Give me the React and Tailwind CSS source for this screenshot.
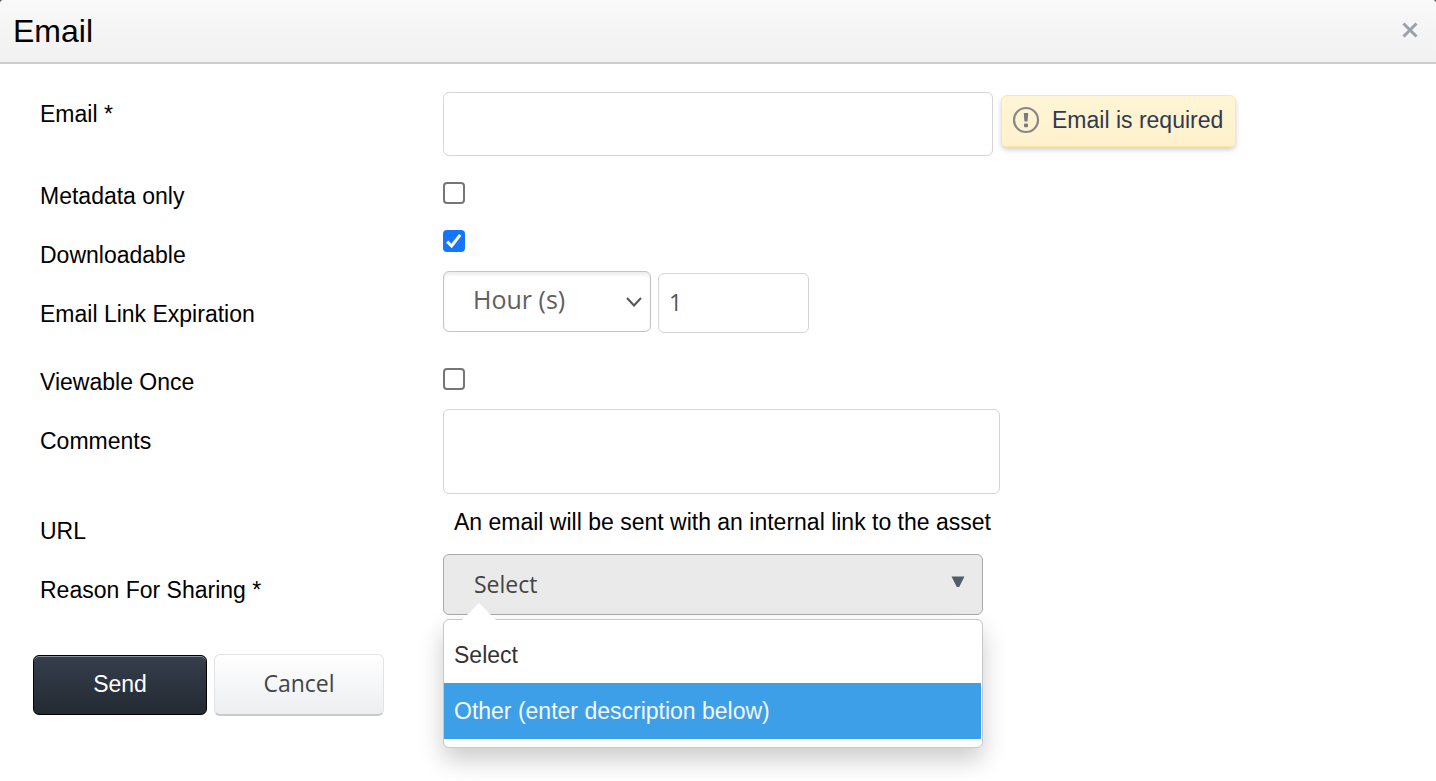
import { useState } from "react";

const options = ["Select", "Other (enter description below)"];

function Row({ label, htmlFor, id, className, labelClass, children }) {
  return (
    <div className={`flex items-start ${className}`}>
      <label id={id} htmlFor={htmlFor} className={`w-[403px] shrink-0 leading-7 ${labelClass}`}>
        {label}
      </label>
      {children}
    </div>
  );
}

function Checkbox({ id, defaultChecked }) {
  return (
    <span className="grid size-[22px] place-items-center">
      <input
        id={id}
        type="checkbox"
        defaultChecked={defaultChecked}
        className="peer col-start-1 row-start-1 size-[22px] appearance-none rounded-[4px] border-2 border-[#767676] bg-white checked:border-[#1476ff] checked:bg-[#1476ff]"
      />
      <svg
        viewBox="0 0 22 22"
        className="pointer-events-none invisible col-start-1 row-start-1 size-[22px] peer-checked:visible"
        aria-hidden="true"
      >
        <path d="M4.2 11.6L8.6 16L17.2 4.8" fill="none" stroke="#ffffff" strokeWidth="3" />
      </svg>
    </span>
  );
}

function ReasonSelect() {
  const [open, setOpen] = useState(true);
  const [value, setValue] = useState("Select");
  const [active, setActive] = useState(1);

  return (
    <div className="relative w-[540px]">
      <button
        id="reason"
        type="button"
        aria-haspopup="listbox"
        aria-expanded={open}
        aria-labelledby="reason-label reason"
        onClick={() => setOpen(!open)}
        className="flex h-[61px] w-full items-center justify-between rounded-md border border-[#aaaaaa] bg-[#eaeaea] pr-[17px] pl-[30px] text-left font-['Open_Sans',sans-serif] text-[#444444]"
      >
        {value}
        <svg viewBox="0 0 14 12" className="mb-[6px] h-3 w-[14px]" aria-hidden="true">
          <path d="M0.5 0.5H13.5L8.2 11H5.8Z" fill="#535c6b" />
        </svg>
      </button>
      {open && (
        <div className="absolute top-full left-0 z-10 mt-1 w-full rounded-md border border-[#c8c8c8] bg-white pt-[7px] pr-px pb-2 shadow-[0_12px_24px_rgba(0,0,0,0.2)]">
          <svg
            viewBox="0 0 36 18"
            className="absolute bottom-full left-[17px] -mb-px h-[18px] w-9"
            aria-hidden="true"
          >
            <path d="M0 18L18 0L36 18Z" fill="#ffffff" />
          </svg>
          <ul role="listbox" aria-labelledby="reason-label">
            {options.map((option, i) => (
              <li
                key={option}
                role="option"
                aria-selected={option === value}
                onMouseEnter={() => setActive(i)}
                onClick={() => {
                  setValue(option);
                  setOpen(false);
                }}
                className={`flex h-14 cursor-pointer items-center px-[10px] ${
                  i === active ? "bg-[#3e9fe9] text-[#f4f8fb]" : "text-[#333333]"
                }`}
              >
                {option}
              </li>
            ))}
          </ul>
        </div>
      )}
    </div>
  );
}

export default function App() {
  return (
    <div className="bg-[#555555]">
      <div
        role="dialog"
        aria-labelledby="dialog-title"
        className="min-h-screen rounded-t-[4px] bg-white font-['Liberation_Sans',Arial,sans-serif] text-[23px] text-black"
      >
        <header className="flex h-16 items-center justify-between rounded-t-[4px] border-b-2 border-[#cccccc] bg-linear-to-b from-[#f9f9f9] to-[#f1f1f1] pr-[18px] pl-[13px]">
          <h1 id="dialog-title" className="text-[32px] leading-10">
            Email
          </h1>
          <button type="button" aria-label="Close" className="pb-[2px]">
            <svg viewBox="0 0 16 16" className="size-4" aria-hidden="true">
              <path d="M1.5 1.5L14.5 14.5M14.5 1.5L1.5 14.5" stroke="#9ca1a9" strokeWidth="3" fill="none" />
            </svg>
          </button>
        </header>

        <form className="pt-7 pb-8" onSubmit={(e) => e.preventDefault()}>
          <div className="px-10">
            <Row label="Email *" htmlFor="email" className="min-h-[90px]" labelClass="pt-2">
              <input
                id="email"
                type="email"
                aria-describedby="email-error"
                className="h-16 w-[550px] rounded-md border border-[#d5d5d5] px-3"
              />
              <div
                id="email-error"
                role="alert"
                className="mt-[3px] ml-2 flex h-[52px] items-center gap-3 rounded-md border border-[#ffe79e] bg-linear-to-b from-[#fff5d5] to-[#fff1cc] pr-3 pb-[2px] pl-[10px] text-[#2f3b4e] shadow-[0_3px_5px_rgba(0,0,0,0.18)]"
              >
                <svg viewBox="0 0 28 28" className="size-7" aria-hidden="true">
                  <circle cx="14" cy="14" r="12" fill="none" stroke="#85888a" strokeWidth="2.2" />
                  <path d="M11.8 7H16.2L15.6 15.5H12.4Z" fill="#777b80" />
                  <rect x="12" y="17.4" width="4" height="3.8" rx="1" fill="#777b80" />
                </svg>
                <span className="leading-7">Email is required</span>
              </div>
            </Row>

            <Row label="Metadata only" htmlFor="metadata" className="min-h-12">
              <Checkbox id="metadata" />
            </Row>

            <Row label="Downloadable" htmlFor="downloadable" className="min-h-[41px]" labelClass="pt-[11px]">
              <Checkbox id="downloadable" defaultChecked />
            </Row>

            <Row label="Email Link Expiration" htmlFor="expiration-unit" className="min-h-[97px]" labelClass="pt-[29px]">
              <div className="relative w-52">
                <select
                  id="expiration-unit"
                  className="h-[61px] w-full appearance-none rounded-md border border-[#c4c4c4] bg-white pb-1 pl-[29px] font-['Open_Sans',sans-serif] text-[25px] text-[#606060] shadow-[inset_0_3px_3px_rgba(0,0,0,0.07)]"
                >
                  <option>Hour (s)</option>
                  <option>Day (s)</option>
                </select>
                <svg
                  viewBox="0 0 16 10"
                  className="pointer-events-none absolute top-[26px] right-[9px] h-[10px] w-4"
                  aria-hidden="true"
                >
                  <path d="M1 1L8 8.5L15 1" fill="none" stroke="#555555" strokeWidth="2" />
                </svg>
              </div>
              <input
                type="number"
                aria-label="Expiration amount"
                defaultValue="1"
                className="mt-[2px] ml-[7px] h-[60px] w-[151px] rounded-md border border-[#d5d5d5] px-[10px] pb-[2px] font-['Open_Sans',sans-serif] text-[#555555]"
              />
            </Row>

            <Row label="Viewable Once" htmlFor="viewable" className="min-h-[41px]">
              <Checkbox id="viewable" />
            </Row>

            <Row label="Comments" htmlFor="comments" className="min-h-[99px]" labelClass="pt-[18px]">
              <textarea
                id="comments"
                className="h-[85px] w-[557px] resize-none rounded-md border border-[#d5d5d5] px-3 py-2"
              />
            </Row>

            <Row label="URL" htmlFor="url-note" className="min-h-[46px]" labelClass="pt-[9px]">
              <output id="url-note" className="pl-[11px] leading-7">
                An email will be sent with an internal link to the asset
              </output>
            </Row>

            <Row label="Reason For Sharing *" id="reason-label" htmlFor="reason" className="min-h-[100px]" labelClass="pt-[22px]">
              <ReasonSelect />
            </Row>
          </div>

          <div className="flex gap-[7px] pl-[33px]">
            <button
              type="submit"
              className="mt-px h-[60px] w-[174px] rounded-md border border-black bg-linear-to-b from-[#373e4d] to-[#222a32] pb-[2px] text-white shadow-[inset_0_1px_0_#8b919c]"
            >
              Send
            </button>
            <button
              type="button"
              className="h-[62px] w-[170px] rounded-md border border-b-2 border-[#e2e3e4] border-b-[#c8cacc] bg-linear-to-b from-white to-[#eceef0] pb-[2px] font-['Open_Sans',sans-serif] text-[#444444]"
            >
              Cancel
            </button>
          </div>
        </form>
      </div>
    </div>
  );
}
